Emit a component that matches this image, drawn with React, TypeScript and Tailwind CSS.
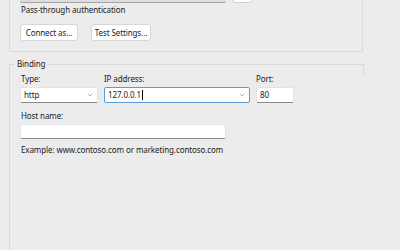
import { ChevronDown } from "lucide-react";

function Field({ className = "", children }: { className?: string; children?: React.ReactNode }) {
  return (
    <div className={`flex items-center bg-white border border-[#e3e3e3] border-b-[#8a8a8a] rounded-[2px] px-[3px] ${className}`}>
      {children}
    </div>
  );
}

export default function App() {
  return (
    <div
      className="w-[400px] h-[250px] overflow-hidden bg-[#ececec] text-[8px] tracking-[-0.1px] text-[#1b1b1b]"
      style={{ fontFamily: '"Noto Sans", "Open Sans", sans-serif' }}
    >
      {/* Authentication group, scrolled past its top */}
      <div className="ml-[9px] w-[354px] h-[52px] border-x border-b border-[#dadada] flex flex-col">
        <div className="flex items-start h-[3px] pl-[10px] gap-[7px]">
          <div className="w-[206px] h-[3px] bg-[#dcdcdc] border-b border-[#a5a5a5] rounded-b-[2px]" />
          <div className="w-[19px] h-[3px] bg-white border-x border-b border-[#cfcfcf] rounded-b-[2px]" />
        </div>
        <div className="pl-[11px] mt-[1px] leading-[12px]">Pass-through authentication</div>
        <div className="flex gap-[13px] pl-[10px] mt-[8px]">
          <button className="w-[58px] h-[17px] bg-white border border-[#d6d6d6] rounded-[3px] leading-none">
            Connect as...
          </button>
          <button className="w-[60px] h-[17px] bg-white border border-[#d6d6d6] rounded-[3px] leading-none">
            Test Settings...
          </button>
        </div>
      </div>

      {/* Binding group */}
      <div className="relative mt-[12px] ml-[9px] w-[354px] h-[200px] border-l border-t border-[#dadada]">
        <div className="absolute -top-[7px] left-[5px] px-[2px] bg-[#ececec] leading-[12px]">Binding</div>
        <div className="absolute -top-[1px] -right-[1px] w-[1px] h-[11px] bg-[#dadada]" />
        <div className="pl-[10px] pt-[8px] flex flex-col">
          <div className="flex gap-[6px]">
            <div className="flex flex-col w-[78px]">
              <span className="pl-[1px] leading-[12px]">Type:</span>
              <Field className="mt-[2px] h-[16px] justify-between">
                <span>http</span>
                <ChevronDown className="w-[8px] h-[8px] text-[#6d6d6d]" strokeWidth={1.5} />
              </Field>
            </div>
            <div className="flex flex-col w-[146px]">
              <span className="leading-[12px]">IP address:</span>
              <div className="mt-[2px] h-[16px] flex items-center justify-between bg-white border border-[#5a9bdc] rounded-[2px] px-[3px]">
                <span className="flex items-center">
                  127.0.0.1<span className="inline-block w-[1px] h-[10px] bg-black ml-[1px]" />
                </span>
                <ChevronDown className="w-[8px] h-[8px] text-[#6d6d6d]" strokeWidth={1.5} />
              </div>
            </div>
            <div className="flex flex-col w-[38px]">
              <span className="leading-[12px]">Port:</span>
              <Field className="mt-[2px] h-[16px]">80</Field>
            </div>
          </div>
          <span className="pl-[1px] mt-[7px] leading-[12px]">Host name:</span>
          <Field className="mt-[2px] h-[15px] w-[206px]" />
          <span className="pl-[1px] mt-[5px] leading-[12px]">Example: www.contoso.com or marketing.contoso.com</span>
        </div>
      </div>
    </div>
  );
}
